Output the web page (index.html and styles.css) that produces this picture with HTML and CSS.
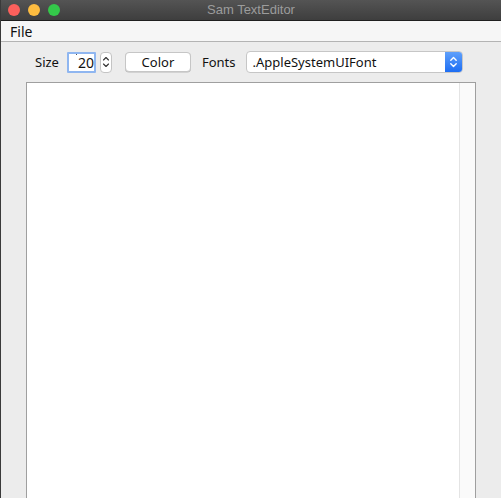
FILE: index.html
```html
<!DOCTYPE html>
<html>
<head>
<meta charset="utf-8">
<link rel="stylesheet" href="styles.css">
</head>
<body>
<div class="window">
  <div class="titlebar">
    <div class="lights">
      <span class="light red"></span>
      <span class="light yellow"></span>
      <span class="light green"></span>
    </div>
    <div class="title">Sam TextEditor</div>
  </div>
  <div class="menubar"><span class="menu">File</span></div>
  <div class="toolbar">
    <span class="label">Size</span>
    <div class="field"><span class="caret"></span>20</div>
    <div class="spinner">
      <svg width="8" height="14" viewBox="0 0 8 14"><path d="M1.5 5 L4 2.5 L6.5 5 M1.5 9 L4 11.5 L6.5 9" fill="none" stroke="#333" stroke-width="1.1" stroke-linecap="round" stroke-linejoin="round"/></svg>
    </div>
    <button class="btn">Color</button>
    <span class="label fonts">Fonts</span>
    <div class="select">
      <span class="select-text">.AppleSystemUIFont</span>
      <span class="select-arrow">
        <svg width="9" height="14" viewBox="0 0 9 14"><path d="M1.8 5.2 L4.5 2.6 L7.2 5.2 M1.8 8.8 L4.5 11.4 L7.2 8.8" fill="none" stroke="#fff" stroke-width="1.4" stroke-linecap="round" stroke-linejoin="round"/></svg>
      </span>
    </div>
  </div>
  <div class="editor">
    <div class="text"></div>
    <div class="scrolltrack"></div>
  </div>
</div>
</body>
</html>
```
FILE: styles.css
```css
html, body {
  margin: 0;
  padding: 0;
}
body {
  width: 501px;
  height: 498px;
  overflow: hidden;
  background: #ececec;
  font-family: "Noto Sans", "Liberation Sans", sans-serif;
  color: #111;
}
.window {
  height: 498px;
  border-left: 1px solid #3a3a3a;
  box-sizing: border-box;
  display: flex;
  flex-direction: column;
  background: #ececec;
}
.titlebar {
  height: 20px;
  background: linear-gradient(#545454, #3e3e3e);
  border-bottom: 1px solid #1f1f1f;
  display: flex;
  align-items: center;
  position: relative;
  flex-shrink: 0;
}
.lights {
  display: flex;
  gap: 8px;
  padding-left: 7px;
}
.light {
  width: 12px;
  height: 12px;
  border-radius: 50%;
  display: block;
}
.red { background: #fc605c; }
.yellow { background: #fdbc40; }
.green { background: #34c84a; }
.title {
  position: absolute;
  left: 0;
  right: 0;
  top: 0;
  height: 20px;
  line-height: 20px;
  text-align: center;
  color: #9c9c9c;
  font-family: "Liberation Sans", sans-serif;
  font-size: 13px;
}
.menubar {
  height: 20px;
  background: #f6f6f6;
  border-bottom: 1px solid #b3b3b3;
  display: flex;
  align-items: center;
  padding-left: 9px;
  flex-shrink: 0;
}
.menu {
  font-size: 14px;
  color: #111;
}
.toolbar {
  display: flex;
  align-items: center;
  height: 22px;
  padding-top: 9px;
  padding-left: 34px;
  flex-shrink: 0;
}
.label {
  font-size: 13px;
  color: #111;
  margin-right: 8px;
}
.field {
  width: 25px;
  height: 17px;
  border: 2px solid #8fb6f0;
  background: #fff;
  font-size: 14px;
  line-height: 17px;
  text-align: right;
  position: relative;
  margin-right: 4px;
  border-radius: 1px;
}
.caret {
  position: absolute;
  left: 7px;
  top: 0;
  width: 1px;
  height: 1px;
  background: #555;
}
.spinner {
  width: 10px;
  height: 19px;
  border: 1px solid #c4c4c4;
  border-radius: 4px;
  background: #fff;
  display: flex;
  align-items: center;
  justify-content: center;
  margin-right: 13px;
}
.btn {
  width: 66px;
  height: 20px;
  border: 1px solid #c6c6c6;
  border-radius: 4px;
  background: #fff;
  font-family: inherit;
  font-size: 13px;
  color: #111;
  padding: 0;
  margin: 0 11px 0 0;
  line-height: 18px;
  box-shadow: 0 0.5px 0 #b8b8b8;
}
.fonts {
  margin-right: 10px;
}
.select {
  width: 215px;
  height: 20px;
  border: 1px solid #c6c6c6;
  border-radius: 4px;
  background: #fff;
  display: flex;
  align-items: center;
  overflow: hidden;
  box-sizing: content-box;
}
.select-text {
  flex: 1;
  font-size: 13px;
  color: #111;
  padding-left: 6px;
}
.select-arrow {
  width: 17px;
  height: 20px;
  background: linear-gradient(#5fa0fb, #1d6ef3);
  display: flex;
  align-items: center;
  justify-content: center;
}
.editor {
  margin: 9px 25px 0 25px;
  flex: 1;
  background: #fff;
  border: 1px solid #9f9f9f;
  border-bottom: none;
  display: flex;
}
.text {
  flex: 1;
}
.scrolltrack {
  width: 15px;
  background: #fafafa;
  border-left: 1px solid #e4e4e4;
}
```
